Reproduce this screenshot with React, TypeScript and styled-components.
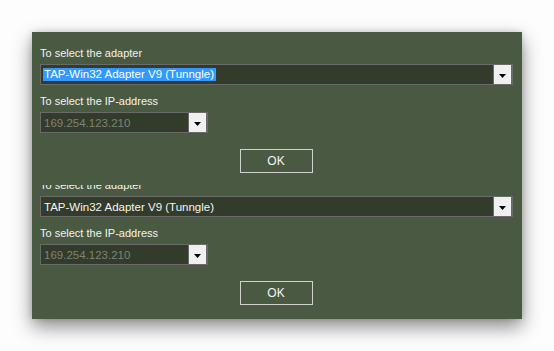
import styled, { createGlobalStyle } from "styled-components";

const GlobalStyle = createGlobalStyle`
  html, body {
    margin: 0;
    padding: 0;
    background: #fdfdfd;
    font-family: "Liberation Sans", Arial, sans-serif;
  }
`;

const Page = styled.div`
  width: 554px;
  height: 351px;
  padding: 32px 0 0 32px;
  box-sizing: border-box;
`;

const Panel = styled.div`
  width: 490px;
  box-sizing: border-box;
  padding: 14px 9px 14px 8px;
  background: #4a5a42;
  box-shadow: 0 8px 18px rgba(0, 0, 0, 0.45), 0 0 6px rgba(0, 0, 0, 0.15);
  display: flex;
  flex-direction: column;
`;

// second copy of the form, its top label is cut off like in the capture
const Clip = styled.div`
  margin-top: 12px;
  overflow: hidden;
`;

const Form = styled.div<{ $cut?: boolean }>`
  display: flex;
  flex-direction: column;
  & > :first-child {
    margin-top: ${(p) => (p.$cut ? "-7px" : "0")};
  }
`;

const Label = styled.div`
  height: 14px;
  line-height: 14px;
  font-size: 11px;
  color: #f2f2f2;
  margin-top: 9px;
  margin-bottom: 4px;
  white-space: nowrap;
`;

const SelectBox = styled.div<{ $width: number }>`
  width: ${(p) => p.$width}px;
  height: 21px;
  box-sizing: border-box;
  display: flex;
  align-items: stretch;
  background: #333c2a;
  border: 1px solid #6a6a6a;
  border-right-width: 2px;
`;

const Value = styled.div<{ $muted?: boolean }>`
  flex: 1;
  display: flex;
  align-items: center;
  padding-left: 3px;
  font-size: 11.5px;
  color: ${(p) => (p.$muted ? "#7d8276" : "#f4f4f4")};
  white-space: nowrap;
  overflow: hidden;
`;

const Selected = styled.span`
  margin-left: -1px;
  background: #3399ff;
  color: #ffffff;
  line-height: 13px;
  padding: 0 1px;
  border-right: 1px solid #e0761a;
`;

const Arrow = styled.div`
  width: 18px;
  box-sizing: border-box;
  background: #f0f0f0;
  border-left: 1px solid #6a6a6a;
  display: flex;
  align-items: center;
  justify-content: center;
  padding-top: 2px;
`;

const OkRow = styled.div`
  display: flex;
  justify-content: center;
  margin-top: 16px;
  padding-right: 1px;
`;

const OkButton = styled.button`
  width: 73px;
  height: 24px;
  box-sizing: border-box;
  background: transparent;
  border: 1px solid #cfd2cc;
  color: #f4f4f4;
  font-family: "Liberation Sans", Arial, sans-serif;
  font-size: 12px;
  padding: 0;
`;

const DownIcon = () => (
  <svg width="7" height="4" viewBox="0 0 7 4">
    <polygon points="0,0 7,0 3.5,4" fill="#000" />
  </svg>
);

const Dropdown = ({
  width,
  children,
}: {
  width: number;
  children: React.ReactNode;
}) => (
  <SelectBox $width={width}>
    {children}
    <Arrow>
      <DownIcon />
    </Arrow>
  </SelectBox>
);

const AdapterForm = ({ cut, active }: { cut?: boolean; active?: boolean }) => (
  <Form $cut={cut}>
    <Label>To select the adapter</Label>
    <Dropdown width={473}>
      <Value>
        {active ? (
          <Selected>TAP-Win32 Adapter V9 (Tunngle)</Selected>
        ) : (
          <span>TAP-Win32 Adapter V9 (Tunngle)</span>
        )}
      </Value>
    </Dropdown>
    <Label>To select the IP-address</Label>
    <Dropdown width={168}>
      <Value $muted>
        <span>169.254.123.210</span>
      </Value>
    </Dropdown>
    <OkRow>
      <OkButton>OK</OkButton>
    </OkRow>
  </Form>
);

export default function App() {
  return (
    <>
      <GlobalStyle />
      <Page>
        <Panel>
          <AdapterForm active />
          <Clip>
            <AdapterForm cut />
          </Clip>
        </Panel>
      </Page>
    </>
  );
}
